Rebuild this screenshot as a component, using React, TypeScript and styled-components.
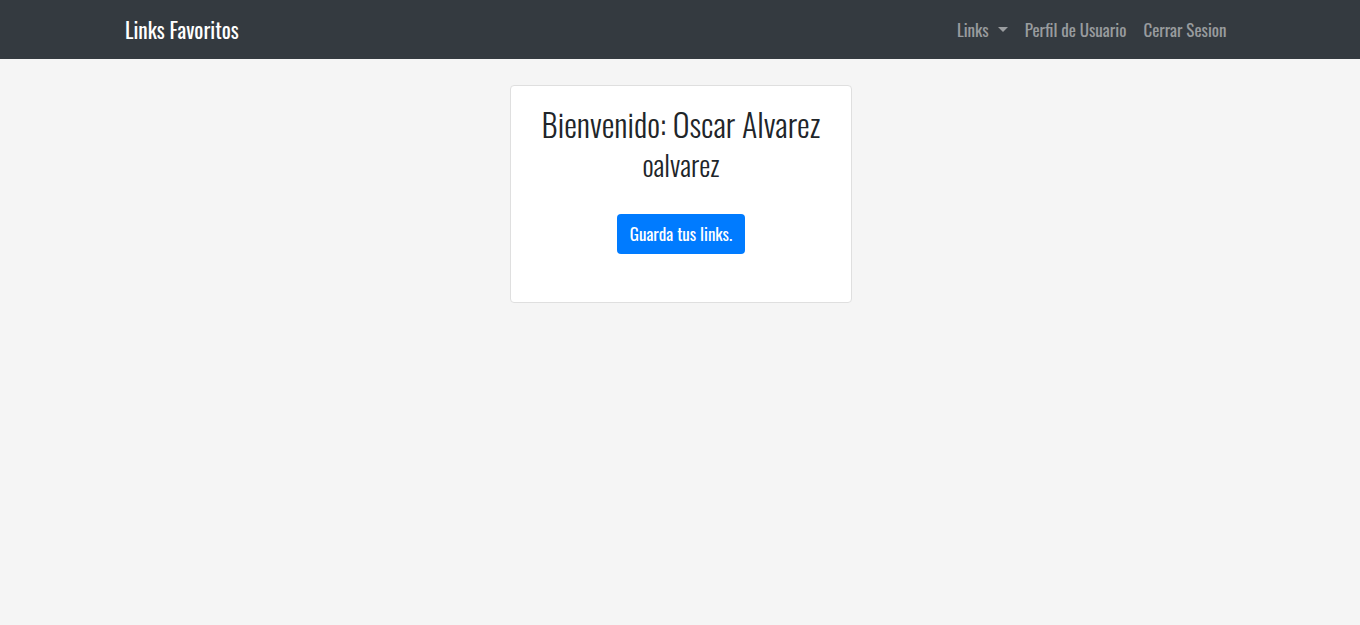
import React from "react";
import styled, { createGlobalStyle } from "styled-components";

const Global = createGlobalStyle`
  html, body { margin: 0; padding: 0; }
  body {
    background: #f5f5f5;
    font-family: "Oswald", "Liberation Sans", Arial, sans-serif;
    color: #212529;
  }
  * { box-sizing: border-box; }
`;

const Navbar = styled.nav`
  background: #343a40;
  height: 59px;
`;

const NavContainer = styled.div`
  max-width: 1140px;
  height: 100%;
  margin: 0 auto;
  padding: 0 15px;
  display: flex;
  align-items: center;
  justify-content: space-between;
`;

const Brand = styled.a`
  color: #ffffff;
  font-size: 21.3px;
  line-height: 30px;
  text-decoration: none;
`;

const NavList = styled.ul`
  list-style: none;
  margin: 0;
  padding: 0;
  display: flex;
  align-items: center;
`;

const NavLink = styled.a`
  display: flex;
  align-items: center;
  padding: 0 8.5px;
  color: rgba(255, 255, 255, 0.5);
  font-size: 17px;
  line-height: 24px;
  text-decoration: none;
`;

const Caret = styled.span`
  display: inline-block;
  margin-left: 9px;
  width: 0;
  height: 0;
  border-top: 5px solid rgba(255, 255, 255, 0.5);
  border-left: 5px solid transparent;
  border-right: 5px solid transparent;
`;

const Main = styled.main`
  display: flex;
  justify-content: center;
  padding: 26px 0 0 2px;
`;

const Card = styled.section`
  width: 342px;
  background: #ffffff;
  border: 1px solid #dfdfdf;
  border-radius: 4px;
  padding: 19px 20px 48px;
  display: flex;
  flex-direction: column;
  align-items: center;
  text-align: center;
`;

const Title = styled.h2`
  margin: 0;
  font-weight: 300;
  font-size: 32px;
  line-height: 1.2;
`;

const Username = styled.h3`
  margin: 5px 0 0;
  font-weight: 300;
  font-size: 28px;
  line-height: 1.2;
`;

const Button = styled.a`
  margin-top: 32px;
  height: 40px;
  padding: 0 13px;
  display: inline-flex;
  align-items: center;
  background: #007bff;
  color: #ffffff;
  border-radius: 4px;
  font-size: 17px;
  text-decoration: none;
`;

export default function App() {
  return (
    <>
      <Global />
      <Navbar>
        <NavContainer>
          <Brand href="#">Links Favoritos</Brand>
          <NavList>
            <li>
              <NavLink href="#">
                Links
                <Caret />
              </NavLink>
            </li>
            <li>
              <NavLink href="#">Perfil de Usuario</NavLink>
            </li>
            <li>
              <NavLink href="#">Cerrar Sesion</NavLink>
            </li>
          </NavList>
        </NavContainer>
      </Navbar>
      <Main>
        <Card>
          <Title>Bienvenido: Oscar Alvarez</Title>
          <Username>oalvarez</Username>
          <Button href="#">Guarda tus links.</Button>
        </Card>
      </Main>
    </>
  );
}
